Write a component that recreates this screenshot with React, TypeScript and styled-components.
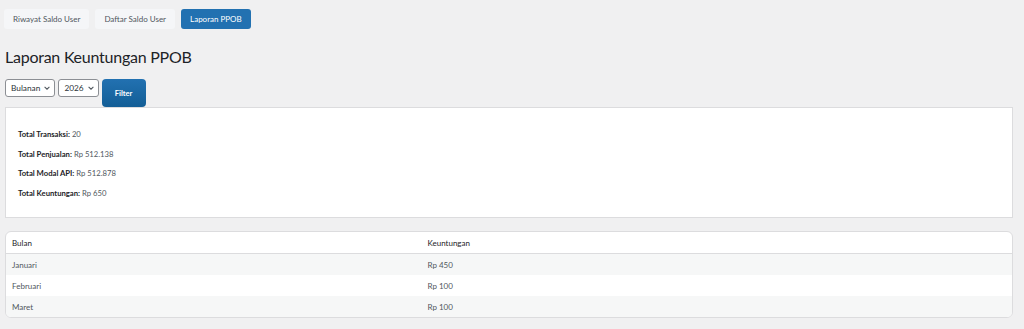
import styled, { createGlobalStyle } from "styled-components";

const GlobalStyle = createGlobalStyle`
  body {
    margin: 0;
    background: #f0f0f1;
    font-family: Lato, "Noto Sans", sans-serif;
    color: #3c434a;
  }
`;

const Page = styled.div`
  padding: 9px 11px 0 5px;
`;

const Tabs = styled.nav`
  display: flex;
  gap: 6px;
  margin-left: -1px;
`;

const Tab = styled.button<{ $active?: boolean }>`
  height: 20px;
  padding: 0 9px;
  border: 0;
  border-radius: 3px;
  font-family: inherit;
  font-size: 8px;
  background: ${p => (p.$active ? "#2271b1" : "#f5f6f8")};
  color: ${p => (p.$active ? "#fff" : "#50575e")};
`;

const Title = styled.h1`
  margin: 16px 0 0;
  font-size: 16px;
  letter-spacing: -0.25px;
  font-weight: 400;
  line-height: 24px;
  color: #1d2327;
`;

const FilterRow = styled.form`
  display: flex;
  align-items: flex-start;
  gap: 3px;
  margin-top: 10px;
`;

const Select = styled.div`
  display: flex;
  align-items: center;
  gap: 3px;
  height: 18px;
  box-sizing: border-box;
  padding: 0 3px 0 5px;
  border: 1px solid #8c8f94;
  border-radius: 3px;
  background: #fff;
  font-size: 8.3px;
  color: #2c3338;

  svg {
    width: 8px;
    height: 8px;
  }
`;

const FilterButton = styled.button`
  width: 44px;
  height: 28px;
  border: 0;
  border-radius: 4px;
  background: linear-gradient(#2271b1, #135e96);
  color: #fff;
  font-family: inherit;
  font-size: 7.5px;
  font-weight: 700;
`;

const Card = styled.section`
  box-sizing: border-box;
  height: 111px;
  padding: 20px 12px 0;
  background: #fff;
  border: 1px solid #dcdcde;
  display: flex;
  flex-direction: column;
  gap: 7.6px;
`;

const Stat = styled.p`
  margin: 0;
  font-size: 7.7px;
  line-height: 12px;
  color: #50575e;

  strong {
    color: #1d2327;
    font-weight: 700;
  }
`;

const Table = styled.table`
  margin-top: 13px;
  width: 100%;
  border-collapse: separate;
  border-spacing: 0;
  border: 1px solid #dcdcde;
  border-radius: 6px;
  overflow: hidden;
  background: #fff;
  font-size: 8px;
`;

const Th = styled.th<{ $wide?: boolean }>`
  width: ${p => (p.$wide ? "41.3%" : "auto")};
  height: 21px;
  padding: 0 6px;
  text-align: left;
  font-weight: 400;
  color: #1d2327;
  border-bottom: 1px solid #dcdcde;
`;

const Row = styled.tr<{ $odd?: boolean }>`
  background: ${p => (p.$odd ? "#f6f7f7" : "#fff")};
`;

const Td = styled.td`
  height: 21px;
  padding: 0 6px;
  color: #50575e;
`;

const Chevron = () => (
  <svg viewBox="0 0 10 10" fill="none" stroke="#50575e" strokeWidth="1.3">
    <path d="M2 3.5l3 3 3-3" />
  </svg>
);

const stats = [
  ["Total Transaksi:", "20"],
  ["Total Penjualan:", "Rp 512.138"],
  ["Total Modal API:", "Rp 512.878"],
  ["Total Keuntungan:", "Rp 650"],
];

const months = [
  ["Januari", "Rp 450"],
  ["Februari", "Rp 100"],
  ["Maret", "Rp 100"],
];

export default function App() {
  return (
    <>
      <GlobalStyle />
      <Page>
        <Tabs>
          <Tab>Riwayat Saldo User</Tab>
          <Tab>Daftar Saldo User</Tab>
          <Tab $active>Laporan PPOB</Tab>
        </Tabs>
        <Title>Laporan Keuntungan PPOB</Title>
        <FilterRow>
          <Select>Bulanan <Chevron /></Select>
          <Select>2026 <Chevron /></Select>
          <FilterButton type="button">Filter</FilterButton>
        </FilterRow>
        <Card>
          {stats.map(([label, value]) => (
            <Stat key={label}>
              <strong>{label}</strong> {value}
            </Stat>
          ))}
        </Card>
        <Table>
          <thead>
            <tr>
              <Th $wide>Bulan</Th>
              <Th>Keuntungan</Th>
            </tr>
          </thead>
          <tbody>
            {months.map(([m, v], i) => (
              <Row key={m} $odd={i % 2 === 0}>
                <Td>{m}</Td>
                <Td>{v}</Td>
              </Row>
            ))}
          </tbody>
        </Table>
      </Page>
    </>
  );
}
